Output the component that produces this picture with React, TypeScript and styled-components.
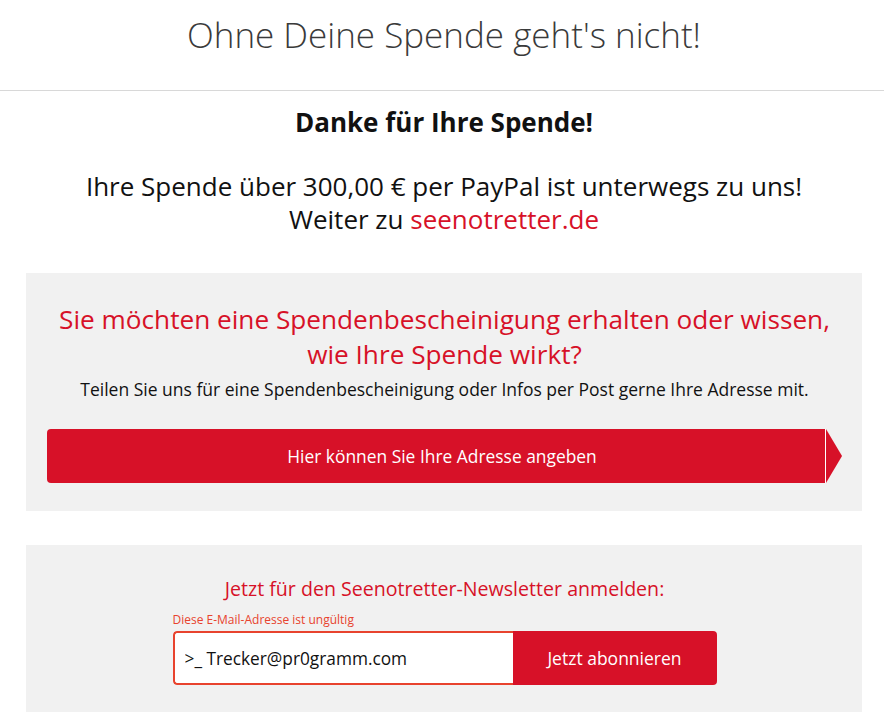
import React from 'react'
import styled, { createGlobalStyle } from 'styled-components'

const GlobalStyle = createGlobalStyle`
  body {
    margin: 0;
    background: #fff;
    font-family: 'Open Sans', 'Liberation Sans', sans-serif;
    color: #111;
  }
`

const RED = '#d71128'

const App: React.FC = () => {
  return (
    <>
      <GlobalStyle />
      <Header>
        <Title>Ohne Deine Spende geht's nicht!</Title>
      </Header>
      <Main>
        <Thanks>Danke für Ihre Spende!</Thanks>
        <Info>
          Ihre Spende über 300,00 € per PayPal ist unterwegs zu uns!
          <br />
          Weiter zu <RedLink href="#">seenotretter.de</RedLink>
        </Info>

        <Panel $top={29} $bottom={28} $gap={37}>
          <PanelHeading>
            Sie möchten eine Spendenbescheinigung erhalten oder wissen,
            <br />
            wie Ihre Spende wirkt?
          </PanelHeading>
          <PanelText>
            Teilen Sie uns für eine Spendenbescheinigung oder Infos per Post gerne Ihre Adresse mit.
          </PanelText>
          <ArrowButton>
            <ArrowBody>Hier können Sie Ihre Adresse angeben</ArrowBody>
            <ArrowTip viewBox="0 0 17 54" preserveAspectRatio="none">
              <polygon points="0,0 17,27 0,54" fill={RED} />
            </ArrowTip>
          </ArrowButton>
        </Panel>

        <Panel $top={30} $bottom={27} $gap={34}>
          <NewsHeading>Jetzt für den Seenotretter-Newsletter anmelden:</NewsHeading>
          <Form>
            <ErrorText>Diese E-Mail-Adresse ist ungültig</ErrorText>
            <InputGroup>
              <EmailInput defaultValue=">_ Trecker@pr0gramm.com" />
              <SubmitButton type="button">Jetzt abonnieren</SubmitButton>
            </InputGroup>
          </Form>
        </Panel>
      </Main>
    </>
  )
}

const Header = styled.header`
  height: 90px;
  border-bottom: 1px solid #d8d8d8;
  display: flex;
  justify-content: center;
  padding-left: 4px;
`

const Title = styled.h1`
  margin: 11px 0 0;
  font-family: 'Open Sans', sans-serif;
  font-weight: 300;
  font-size: 35px;
  line-height: 48px;
  color: #3a3a3a;
`

const Main = styled.main`
  padding: 0 22px 0 26px;
`

const Thanks = styled.h2`
  margin: 14px 0 0;
  text-align: center;
  font-size: 26px;
  font-weight: 700;
  line-height: 34px;
  color: #111;
`

const Info = styled.p`
  margin: 31px 0 0;
  text-align: center;
  font-size: 26px;
  line-height: 33px;
  color: #111;
`

const RedLink = styled.a`
  color: ${RED};
  text-decoration: none;
`

const Panel = styled.section<{ $top: number; $bottom: number; $gap: number }>`
  margin-top: ${(p) => p.$gap}px;
  background: #f1f1f1;
  padding: ${(p) => p.$top}px 20px ${(p) => p.$bottom}px 21px;
  display: flex;
  flex-direction: column;
  align-items: center;
`

const PanelHeading = styled.h3`
  margin: 0;
  text-align: center;
  font-size: 26.2px;
  font-weight: 400;
  line-height: 35px;
  color: ${RED};
`

const PanelText = styled.p`
  margin: 5px 0 0;
  font-size: 17.5px;
  line-height: 24px;
  text-align: center;
  color: #111;
`

const ArrowButton = styled.div`
  margin-top: 28px;
  align-self: stretch;
  display: flex;
  height: 54px;
  cursor: pointer;
`

const ArrowBody = styled.div`
  flex: 1;
  background: ${RED};
  color: #fff;
  border-radius: 4px 0 0 4px;
  display: flex;
  align-items: center;
  justify-content: center;
  padding-left: 12px;
  font-size: 17.4px;
  border-right: 1px solid #fff;
`

const ArrowTip = styled.svg`
  width: 16px;
  height: 54px;
  display: block;
`

const NewsHeading = styled.h4`
  margin: 0;
  font-size: 19.6px;
  font-weight: 400;
  line-height: 28px;
  color: ${RED};
  text-align: center;
`

const Form = styled.div`
  margin-top: 9px;
  width: 544px;
  display: flex;
  flex-direction: column;
`

const ErrorText = styled.div`
  font-size: 12px;
  line-height: 16px;
  margin-bottom: 3px;
  color: #e8432e;
`

const InputGroup = styled.div`
  display: flex;
  height: 54px;
  border-radius: 4px;
  overflow: hidden;
`

const EmailInput = styled.input`
  flex: 0 0 340px;
  box-sizing: border-box;
  border: 2px solid #e8432e;
  border-right: none;
  border-radius: 4px 0 0 4px;
  padding: 0 10px;
  font-family: 'Open Sans', sans-serif;
  font-size: 17.3px;
  color: #111;
  background: #fff;
  outline: none;
`

const SubmitButton = styled.button`
  flex: 1;
  border: none;
  background: ${RED};
  color: #fff;
  font-family: 'Open Sans', sans-serif;
  font-size: 17.5px;
  cursor: pointer;
`

export default App
